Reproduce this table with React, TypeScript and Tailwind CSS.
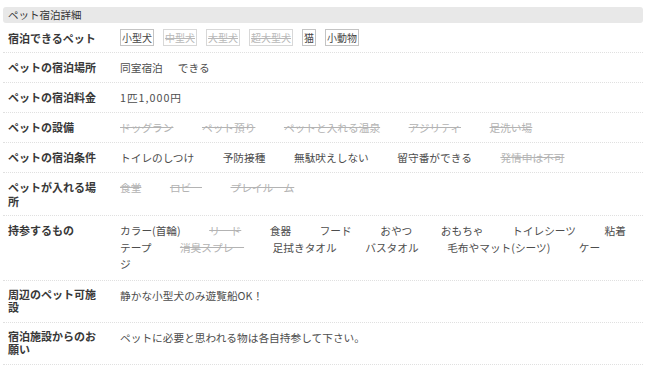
import { ReactNode } from "react";

type Item = { text: ReactNode; off?: boolean };

function Items({ items }: { items: Item[] }) {
  return (
    <>
      {items.map((item, i) => (
        <span
          key={i}
          className={
            item.off
              ? "mr-[28.5px] text-[#b3b3b3] line-through"
              : "mr-[28.5px]"
          }
        >
          {item.text}
        </span>
      ))}
    </>
  );
}

function Row({
  label,
  children,
  className = "py-[7px]",
  labelClass = "leading-[14px]",
  valueClass = "leading-[15px]",
}: {
  label: string;
  children: ReactNode;
  className?: string;
  labelClass?: string;
  valueClass?: string;
}) {
  return (
    <div className={`flex border-b border-dotted border-[#e0e0e0] ${className}`}>
      <div
        className={`w-[117px] shrink-0 pl-[5px] pr-[20px] text-[11px] font-bold text-[#383838] ${labelClass}`}
      >
        {label}
      </div>
      <div className={`flex-1 whitespace-nowrap text-[10.7px] text-[#4d4d4d] ${valueClass}`}>
        {children}
      </div>
    </div>
  );
}

const tags = [
  { text: "小型犬", off: false },
  { text: "中型犬", off: true },
  { text: "大型犬", off: true },
  { text: "超大型犬", off: true },
  { text: "猫", off: false },
  { text: "小動物", off: false },
];

export default function App() {
  return (
    <div className="h-[373px] w-[646px] overflow-hidden bg-white font-['Noto_Sans_CJK_JP',sans-serif]">
      <div className="mx-[3px] pt-[7px]">
        <div className="h-4 rounded-[3px] bg-[#e8e8e8] pl-[5px] text-[10.5px] leading-4 text-[#333]">
          ペット宿泊詳細
        </div>
        <div className="pt-px">
          <Row
            label="宿泊できるペット"
            className="items-center pt-[5px] pb-[6px]"
            valueClass="flex"
          >
            {tags.map((t) => (
              <span
                key={t.text}
                className={
                  t.off
                    ? "mr-[9px] border border-[#d8d8d8] px-px text-[10px] leading-[15px] text-[#b8b8b8] line-through"
                    : "mr-[9px] border border-[#c4c4c4] px-px text-[10px] leading-[15px] text-[#444]"
                }
              >
                {t.text}
              </span>
            ))}
          </Row>
          <Row label="ペットの宿泊場所">
            <span>同室宿泊</span>
            <span className="ml-[15px]">できる</span>
          </Row>
          <Row label="ペットの宿泊料金">
            <span className="tracking-[1px]">1匹1,000円</span>
          </Row>
          <Row label="ペットの設備">
            <Items
              items={[
                { text: "ドッグラン", off: true },
                { text: "ペット預り", off: true },
                { text: "ペットと入れる温泉", off: true },
                { text: "アジリティ", off: true },
                { text: "足洗い場", off: true },
              ]}
            />
          </Row>
          <Row label="ペットの宿泊条件">
            <Items
              items={[
                { text: "トイレのしつけ" },
                { text: "予防接種" },
                { text: "無駄吠えしない" },
                { text: "留守番ができる" },
                { text: "発情中は不可", off: true },
              ]}
            />
          </Row>
          <Row label="ペットが入れる場所">
            <Items
              items={[
                { text: "食堂", off: true },
                { text: "ロビー", off: true },
                { text: "プレイルーム", off: true },
              ]}
            />
          </Row>
          <Row label="持参するもの" valueClass="leading-[16.5px]">
            <Items
              items={[
                { text: "カラー(首輪)" },
                { text: "リード", off: true },
                { text: "食器" },
                { text: "フード" },
                { text: "おやつ" },
                { text: "おもちゃ" },
                { text: "トイレシーツ" },
                {
                  text: (
                    <>
                      粘着
                      <br />
                      テープ
                    </>
                  ),
                },
                { text: "消臭スプレー", off: true },
                { text: "足拭きタオル" },
                { text: "バスタオル" },
                { text: "毛布やマット(シーツ)" },
                {
                  text: (
                    <>
                      ケー
                      <br />ジ
                    </>
                  ),
                },
              ]}
            />
          </Row>
          <Row label="周辺のペット可施設" labelClass="leading-[13.5px]">
            <span>静かな小型犬のみ遊覧船OK！</span>
          </Row>
          <Row label="宿泊施設からのお願い" labelClass="leading-[13.5px]">
            <span>ペットに必要と思われる物は各自持参して下さい。</span>
          </Row>
        </div>
      </div>
    </div>
  );
}
